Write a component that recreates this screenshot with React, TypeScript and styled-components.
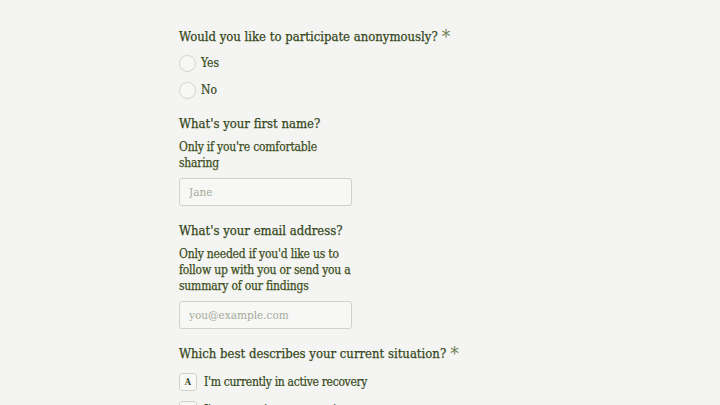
import React from "react";
import styled, { createGlobalStyle } from "styled-components";

const GlobalStyle = createGlobalStyle`
  html, body {
    margin: 0;
    padding: 0;
    background: #f4f4f2;
  }
  body {
    font-family: "DejaVu Serif Condensed", "DejaVu Serif", serif;
    color: #3b4c1f;
  }
`;

const Form = styled.form`
  width: 362px;
  margin: 0 auto;
  padding-top: 27px;
  display: flex;
  flex-direction: column;
`;

const Question = styled.div`
  display: flex;
  flex-direction: column;
  margin-bottom: 13px;
`;

const Title = styled.div`
  font-size: 13px;
  line-height: 20px;
  color: #35481a;
  -webkit-text-stroke: 0.25px #35481a;
  margin-bottom: 5px;
`;

const Required = styled.span`
  display: inline-block;
  margin-left: 4px;
  font-size: 19px;
  line-height: 10px;
  vertical-align: top;
  position: relative;
  top: 4px;
  color: #6f8152;
  -webkit-text-stroke: 0;
`;

const Description = styled.div`
  max-width: 176px;
  font-size: 12px;
  letter-spacing: -0.2px;
  line-height: 16px;
  color: #3d4f22;
  -webkit-text-stroke: 0.25px #3d4f22;
  margin-bottom: 7px;
`;

const RadioList = styled.div`
  display: flex;
  flex-direction: column;
  gap: 5px;
`;

const RadioRow = styled.label`
  display: flex;
  align-items: center;
  gap: 5px;
  height: 22px;
  font-size: 12px;
  color: #35481a;
  -webkit-text-stroke: 0.2px #35481a;
`;

const RadioCircle = styled.span`
  width: 15px;
  height: 15px;
  border-radius: 50%;
  border: 1px solid #d2d3cd;
  background: #f7f7f5;
`;

const TextInput = styled.input`
  box-sizing: border-box;
  width: 173px;
  height: 28px;
  margin-bottom: 2px;
  padding: 0 9px;
  border: 1px solid #cfd2c8;
  border-radius: 3px;
  background: #f7f7f5;
  font-family: inherit;
  font-size: 11.7px;
  color: #35481a;
  outline: none;

  &::placeholder {
    color: #a4ab9b;
  }
`;

const ChoiceList = styled.div`
  display: flex;
  flex-direction: column;
  gap: 8px;
  margin-top: 3px;
`;

const ChoiceRow = styled.div`
  display: flex;
  align-items: center;
  gap: 7px;
  height: 20px;
  font-size: 12px;
  letter-spacing: -0.3px;
  color: #35481a;
  -webkit-text-stroke: 0.2px #35481a;
`;

const KeyBox = styled.span`
  box-sizing: border-box;
  width: 18px;
  height: 18px;
  display: flex;
  align-items: center;
  justify-content: center;
  border: 1px solid #cfd0ca;
  border-radius: 3px;
  background: #f8f8f6;
  font-size: 9px;
  font-weight: bold;
  letter-spacing: 0;
  color: #35481a;
  -webkit-text-stroke: 0;
`;

const App: React.FC = () => {
  return (
    <>
      <GlobalStyle />
      <Form>
        <Question>
          <Title>
            Would you like to participate anonymously?
            <Required>*</Required>
          </Title>
          <RadioList>
            <RadioRow>
              <RadioCircle />
              Yes
            </RadioRow>
            <RadioRow>
              <RadioCircle />
              No
            </RadioRow>
          </RadioList>
        </Question>

        <Question>
          <Title>What's your first name?</Title>
          <Description>Only if you're comfortable sharing</Description>
          <TextInput placeholder="Jane" />
        </Question>

        <Question>
          <Title>What's your email address?</Title>
          <Description>
            Only needed if you'd like us to follow up with you or send you a
            summary of our findings
          </Description>
          <TextInput placeholder="you@example.com" />
        </Question>

        <Question>
          <Title>
            Which best describes your current situation?
            <Required>*</Required>
          </Title>
          <ChoiceList>
            <ChoiceRow>
              <KeyBox>A</KeyBox>
              I'm currently in active recovery
            </ChoiceRow>
            <ChoiceRow>
              <KeyBox>B</KeyBox>
              I'm supporting someone in recovery
            </ChoiceRow>
          </ChoiceList>
        </Question>
      </Form>
    </>
  );
};

export default App;
